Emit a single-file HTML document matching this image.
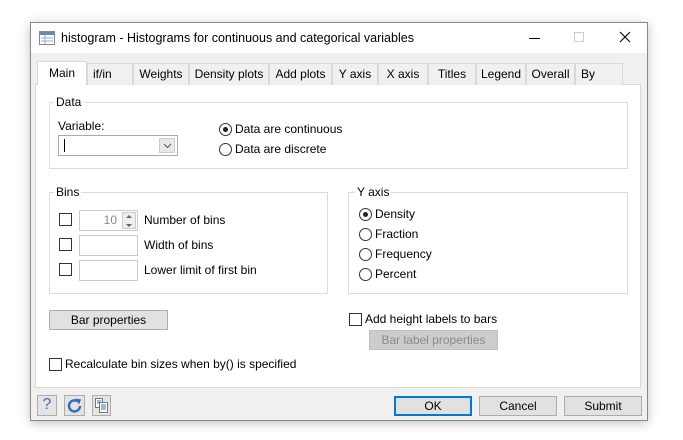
<!DOCTYPE html>
<html><head><meta charset="utf-8"><style>
*{box-sizing:border-box;margin:0;padding:0}
body{width:683px;height:440px;background:#fff;font-family:"Liberation Sans",sans-serif;font-size:12px;color:#000;position:relative;overflow:hidden}
.a{position:absolute}
.win{left:30px;top:22px;width:618px;height:399px;border:1px solid #888;background:#f0f0f0;box-shadow:0 2px 10px rgba(0,0,0,.25)}
.title{left:0;top:0;width:616px;height:30px;background:#fff}
.tab{top:40px;height:22px;border:1px solid #d9d9d9;border-bottom:none;background:#f0f0f0;text-align:center;line-height:20px}
.panel{left:4px;top:61px;width:606px;height:304px;background:#fff;border:1px solid #d9d9d9}
.grp{border:1px solid #dcdcdc}
.lg{background:#fff;padding:0 2px;line-height:14px}
.cb{width:13px;height:13px;border:1px solid #333;background:#fff}
.rb{width:13px;height:13px;border:1px solid #333;border-radius:50%;background:#fff}
.rb.on::after{content:"";position:absolute;left:3px;top:3px;width:5px;height:5px;border-radius:50%;background:#222}
.tb{border:1px solid #ccc;background:#fff;height:21px}
.btn{height:20px;border:1px solid #adadad;background:#e1e1e1;text-align:center;line-height:18px}
</style></head><body>
<div class="a win">
 <div class="a title">
  <svg class="a" style="left:8px;top:8px" width="16" height="14"><rect x="0.5" y="0.5" width="15" height="13" fill="#fff" stroke="#7a8aa0"/><rect x="1" y="1" width="14" height="3" fill="#6d87b5"/><line x1="2" y1="7" x2="14" y2="7" stroke="#9aa8c0"/><line x1="2" y1="10" x2="14" y2="10" stroke="#9aa8c0"/><line x1="6" y1="4" x2="6" y2="13" stroke="#9aa8c0"/></svg>
  <div class="a" style="left:30px;top:8px;font-size:12.5px">histogram - Histograms for continuous and categorical variables</div>
  <div class="a" style="left:498px;top:15px;width:11px;height:1px;background:#000"></div>
  <div class="a" style="left:543px;top:9px;width:10px;height:10px;border:1px solid #ccc"></div>
  <svg class="a" style="left:588px;top:8px" width="12" height="12"><path d="M1 1L11 11M11 1L1 11" stroke="#000" stroke-width="1.1"/></svg>
 </div>
 <div class="a panel"></div>
 <div class="a tab" style="left:6px;top:38px;width:50px;height:24px;background:#fff;border-color:#d9d9d9;line-height:22px;z-index:2">Main</div>
 <div class="a tab" style="left:56px;width:46px;text-align:left;padding-left:5px">if/in</div>
 <div class="a tab" style="left:102px;width:56px">Weights</div>
 <div class="a tab" style="left:158px;width:80px">Density plots</div>
 <div class="a tab" style="left:238px;width:63px">Add plots</div>
 <div class="a tab" style="left:301px;width:46px">Y axis</div>
 <div class="a tab" style="left:347px;width:50px">X axis</div>
 <div class="a tab" style="left:397px;width:48px">Titles</div>
 <div class="a tab" style="left:445px;width:50px">Legend</div>
 <div class="a tab" style="left:495px;width:49px">Overall</div>
 <div class="a tab" style="left:544px;width:48px;text-align:left;padding-left:5px">By</div>

 <div class="a grp" style="left:18px;top:79px;width:579px;height:67px"></div>
 <div class="a lg" style="left:23px;top:72px">Data</div>
 <div class="a" style="left:27px;top:96px">Variable:</div>
 <div class="a tb" style="left:27px;top:112px;width:120px;height:21px;border-color:#aaa">
  <div class="a" style="left:5px;top:3px;width:1px;height:13px;background:#000"></div>
  <div class="a" style="left:100px;top:2px;width:16px;height:15px;border:1px solid #ccc;background:#e8e8e8"></div>
  <svg class="a" style="left:104px;top:7px" width="9" height="6"><path d="M1 1L4.5 4.5L8 1" fill="none" stroke="#555"/></svg>
 </div>
 <div class="a rb on" style="left:188px;top:100px"></div>
 <div class="a" style="left:204px;top:99px">Data are continuous</div>
 <div class="a rb" style="left:188px;top:120px"></div>
 <div class="a" style="left:204px;top:119px">Data are discrete</div>

 <div class="a grp" style="left:18px;top:169px;width:279px;height:102px"></div>
 <div class="a lg" style="left:23px;top:162px">Bins</div>
 <div class="a cb" style="left:28px;top:190px"></div>
 <div class="a tb" style="left:48px;top:187px;width:59px;color:#888;text-align:right;padding-right:20px;line-height:19px">10
  <div class="a" style="left:42px;top:1px;width:14px;height:17px;border:1px solid #ccc;background:#eee"></div>
  <svg class="a" style="left:45px;top:3px" width="8" height="14"><path d="M1 4L4 1L7 4Z" fill="#666"/><path d="M1 10L4 13L7 10Z" fill="#666"/></svg>
 </div>
 <div class="a" style="left:113px;top:190px">Number of bins</div>
 <div class="a cb" style="left:28px;top:215px"></div>
 <div class="a tb" style="left:48px;top:212px;width:59px"></div>
 <div class="a" style="left:113px;top:215px">Width of bins</div>
 <div class="a cb" style="left:28px;top:240px"></div>
 <div class="a tb" style="left:48px;top:237px;width:59px"></div>
 <div class="a" style="left:113px;top:240px">Lower limit of first bin</div>

 <div class="a grp" style="left:317px;top:169px;width:280px;height:102px"></div>
 <div class="a lg" style="left:324px;top:162px">Y axis</div>
 <div class="a rb on" style="left:328px;top:185px"></div><div class="a" style="left:344px;top:184px">Density</div>
 <div class="a rb" style="left:328px;top:205px"></div><div class="a" style="left:344px;top:204px">Fraction</div>
 <div class="a rb" style="left:328px;top:225px"></div><div class="a" style="left:344px;top:224px">Frequency</div>
 <div class="a rb" style="left:328px;top:245px"></div><div class="a" style="left:344px;top:244px">Percent</div>

 <div class="a btn" style="left:18px;top:287px;width:119px">Bar properties</div>
 <div class="a cb" style="left:318px;top:290px"></div>
 <div class="a" style="left:334px;top:289px">Add height labels to bars</div>
 <div class="a btn" style="left:338px;top:307px;width:129px;color:#8a8a8a;background:#ccc;border-color:#bfbfbf">Bar label properties</div>
 <div class="a cb" style="left:18px;top:335px"></div>
 <div class="a" style="left:34px;top:334px">Recalculate bin sizes when by() is specified</div>

 <div class="a btn" style="left:6px;top:372px;width:20px;height:21px;color:#3a6fb5;font-size:16px;line-height:18px;background:#e4e4e4">?</div>
 <div class="a btn" style="left:33px;top:372px;width:21px;height:21px;background:#e4e4e4"></div>
 <svg class="a" style="left:35px;top:374px" width="18" height="18"><path d="M14 9A5.5 5.5 0 1 1 11.5 4.3" fill="none" stroke="#2f6db5" stroke-width="2.4"/><path d="M9.5 1.5L15 2.5L13 7.5Z" fill="#2f6db5"/></svg>
 <div class="a btn" style="left:61px;top:372px;width:19px;height:21px;background:#e4e4e4"></div>
 <svg class="a" style="left:63px;top:374px" width="15" height="17"><rect x="1.5" y="1.5" width="7" height="9" fill="#fff" stroke="#777"/><rect x="5.5" y="5.5" width="8" height="10" fill="#fff" stroke="#777"/><path d="M7 8H12M7 10H12M7 12H12" stroke="#3a6fb5"/><path d="M3 4H7M3 6H5" stroke="#3a6fb5"/></svg>

 <div class="a btn" style="left:363px;top:373px;width:78px;border:2px solid #0078d7;line-height:16px">OK</div>
 <div class="a btn" style="left:448px;top:373px;width:78px">Cancel</div>
 <div class="a btn" style="left:533px;top:373px;width:78px">Submit</div>
</div>
</body></html>
